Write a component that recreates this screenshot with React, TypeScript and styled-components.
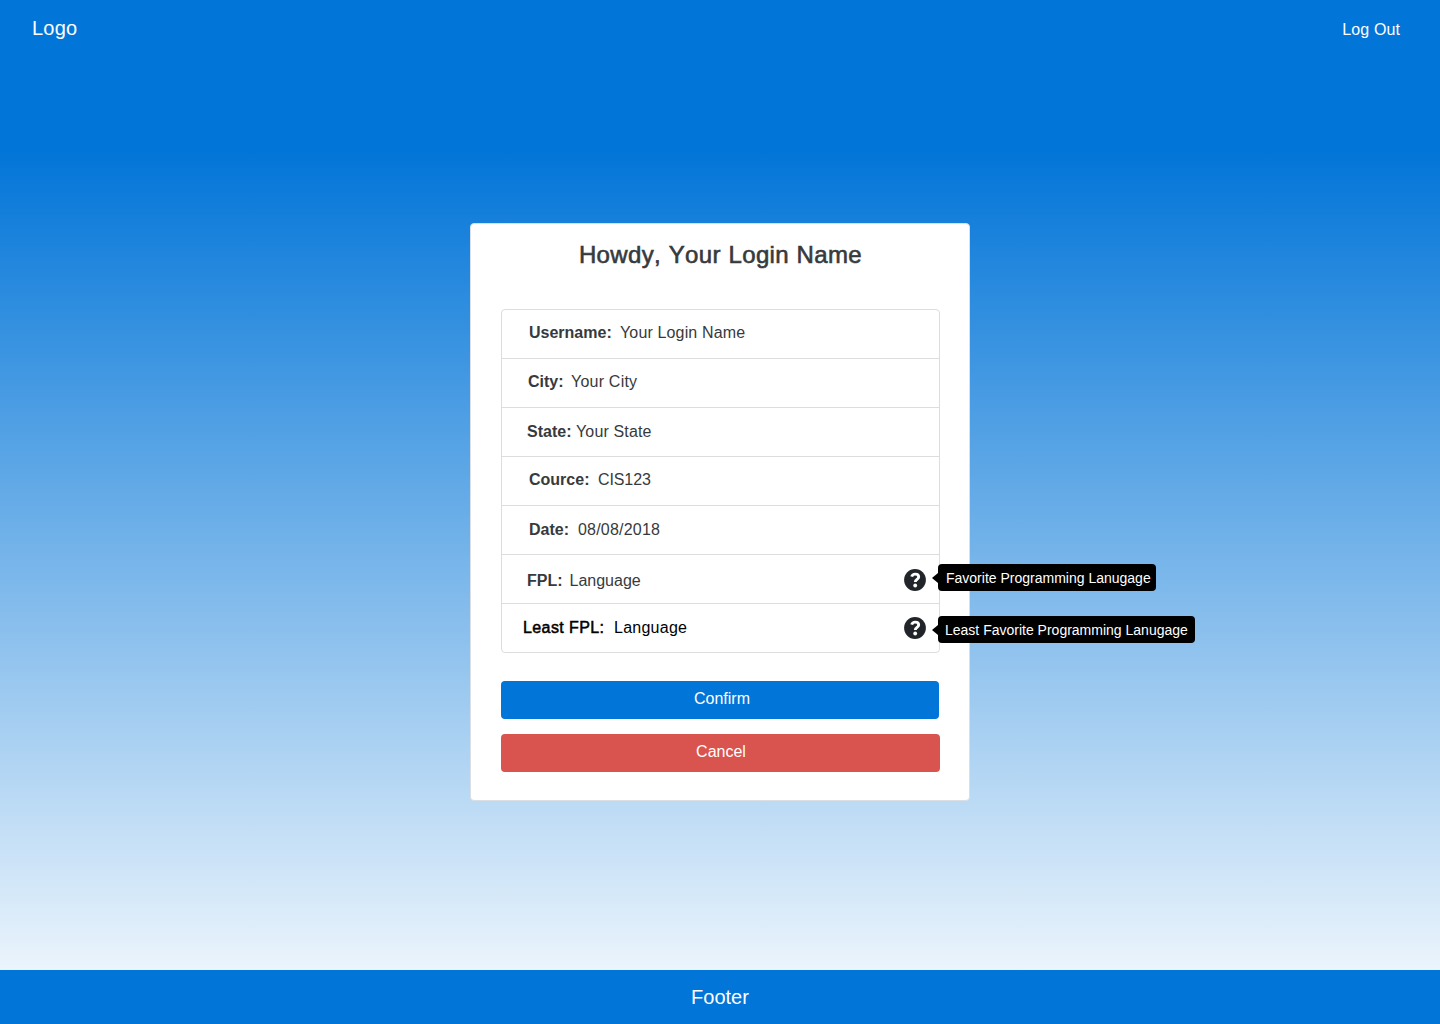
import React from 'react';
import styled, { createGlobalStyle } from 'styled-components';

const GlobalStyle = createGlobalStyle`
  *, *::before, *::after { box-sizing: border-box; }
  body { margin: 0; font-family: "Liberation Sans", Arial, sans-serif; }
`;

const Page = styled.div`
  min-height: 1024px;
  display: flex;
  flex-direction: column;
  background: linear-gradient(180deg, #0275d8 0, #0275d8 150px, #ffffff 1040px);
`;

const NavBar = styled.header`
  height: 56px;
  padding: 0 40px 0 32px;
  display: flex;
  align-items: center;
  justify-content: space-between;
  background: #0275d8;
  color: #fff;
`;

const Brand = styled.span`
  font-size: 20px;
  line-height: 24px;
  letter-spacing: 0.2px;
`;

const LogOut = styled.a`
  padding-top: 3px;
  font-size: 16px;
  line-height: 24px;
  letter-spacing: 0.1px;
`;

const Main = styled.main`
  flex: 1;
  display: flex;
  justify-content: center;
  align-items: flex-start;
  padding-top: 167px;
`;

const Card = styled.section`
  width: 500px;
  height: 578px;
  padding: 0 30px;
  display: flex;
  flex-direction: column;
  background: #fff;
  border: 1px solid #d9dfe4;
  border-radius: 4px;
`;

const Title = styled.h1`
  margin: 16px 0 40px;
  padding-left: 1px;
  font-size: 24px;
  line-height: 29px;
  font-weight: 400;
  font-kerning: none;
  letter-spacing: 0.36px;
  word-spacing: 0.6px;
  -webkit-text-stroke: 0.6px currentColor;
  color: #373a3c;
  text-align: center;
  white-space: nowrap;
`;

const List = styled.ul`
  width: 439px;
  margin: 0 0 28px;
  padding: 0;
  list-style: none;
  border: 1px solid #ddd;
  border-radius: 4px;
`;

const Row = styled.li<{ $left: number; $top: number; $dark?: boolean }>`
  position: relative;
  height: 49px;
  padding: ${p => p.$top}px 13px 0 ${p => p.$left}px;
  display: flex;
  align-items: flex-start;
  font-size: 16px;
  line-height: 24px;
  white-space: nowrap;
  color: ${p => (p.$dark ? '#000' : '#373a3c')};

  &:first-child { height: 48px; }
  & + & { border-top: 1px solid #ddd; }
`;

const Label = styled.span<{ $width: number; $medium?: boolean }>`
  flex: none;
  width: ${p => p.$width}px;
  font-weight: ${p => (p.$medium ? 400 : 700)};
  letter-spacing: ${p => (p.$medium ? '0.4px' : '0')};
  -webkit-text-stroke: ${p => (p.$medium ? '0.5px currentColor' : '0')};
`;

const Value = styled.span<{ $spacing?: number }>`
  flex: 1;
  letter-spacing: ${p => p.$spacing ?? 0.15}px;
`;

const HelpIcon = styled.svg<{ $drop: number }>`
  flex: none;
  width: 22px;
  height: 22px;
  margin-top: ${p => p.$drop}px;
`;

const Tooltip = styled.span<{ $top: number; $width: number; $indent: number }>`
  position: absolute;
  left: 436px;
  top: ${p => p.$top}px;
  width: ${p => p.$width}px;
  height: 27px;
  padding-left: ${p => p.$indent}px;
  border-radius: 4px;
  background: #000;
  color: #fff;
  font-size: 14px;
  line-height: 28px;

  &::before {
    content: '';
    position: absolute;
    left: -6px;
    top: 9px;
    border: 5px solid transparent;
    border-left: 0;
    border-right: 6px solid #000;
  }
`;

const Button = styled.button<{ $color: string; $width: number; $shift: number }>`
  width: ${p => p.$width}px;
  height: 38px;
  margin: 0 0 15px;
  padding: 0 0 3px ${p => p.$shift}px;
  border: 0;
  border-radius: 4px;
  background: ${p => p.$color};
  color: #fff;
  font: 16px "Liberation Sans", Arial, sans-serif;
`;

const Footer = styled.footer`
  height: 54px;
  display: flex;
  align-items: center;
  justify-content: center;
  background: #0275d8;
  color: #fff;
  font-size: 20px;
`;

interface Field {
  label: string;
  value: string;
  left: number;
  top: number;
  labelWidth: number;
  dark?: boolean;
  spacing?: number;
  help?: { text: string; drop: number; top: number; width: number; indent: number };
}

const fields: Field[] = [
  { label: 'Username:', value: 'Your Login Name', left: 27, top: 11, labelWidth: 91 },
  { label: 'City:', value: 'Your City', left: 26, top: 11, labelWidth: 43, spacing: 0.22 },
  { label: 'State:', value: 'Your State', left: 25, top: 12, labelWidth: 49 },
  { label: 'Cource:', value: 'CIS123', left: 27, top: 11, labelWidth: 69, spacing: -0.1 },
  { label: 'Date:', value: '08/08/2018', left: 27, top: 12, labelWidth: 49, spacing: 0.2 },
  {
    label: 'FPL:', value: 'Language', left: 25, top: 14, labelWidth: 42.5, spacing: 0,
    help: { text: 'Favorite Programming Lanugage', drop: 0, top: 9, width: 218, indent: 8 },
  },
  {
    label: 'Least FPL:', value: 'Language', left: 21, top: 12, labelWidth: 91, dark: true, spacing: 0.25,
    help: { text: 'Least Favorite Programming Lanugage', drop: 1, top: 12, width: 257, indent: 7 },
  },
];

function QuestionMark({ drop }: { drop: number }) {
  return (
    <HelpIcon $drop={drop} viewBox="0 0 22 22" aria-hidden="true">
      <circle cx="11" cy="11" r="10.9" fill="#212529" />
      <path
        d="M7.7 7.6C8.2 6 9.4 5.1 11.2 5.1c2 0 3.5 1.1 3.5 2.8 0 2.4-3.4 2.5-3.4 5.1"
        fill="none"
        stroke="#fff"
        strokeWidth="2.9"
      />
      <circle cx="11.2" cy="16.5" r="1.9" fill="#fff" />
    </HelpIcon>
  );
}

export default function App() {
  return (
    <Page>
      <GlobalStyle />
      <NavBar>
        <Brand>Logo</Brand>
        <LogOut>Log Out</LogOut>
      </NavBar>
      <Main>
        <Card>
          <Title>Howdy, Your Login Name</Title>
          <List>
            {fields.map(f => (
              <Row key={f.label} $left={f.left} $top={f.top} $dark={f.dark}>
                <Label $width={f.labelWidth} $medium={f.dark}>{f.label}</Label>
                <Value $spacing={f.spacing}>{f.value}</Value>
                {f.help && (
                  <>
                    <QuestionMark drop={f.help.drop} />
                    <Tooltip $top={f.help.top} $width={f.help.width} $indent={f.help.indent}>
                      {f.help.text}
                    </Tooltip>
                  </>
                )}
              </Row>
            ))}
          </List>
          <Button $color="#0275d8" $width={438} $shift={4}>Confirm</Button>
          <Button $color="#d9534f" $width={439} $shift={1}>Cancel</Button>
        </Card>
      </Main>
      <Footer>Footer</Footer>
    </Page>
  );
}
